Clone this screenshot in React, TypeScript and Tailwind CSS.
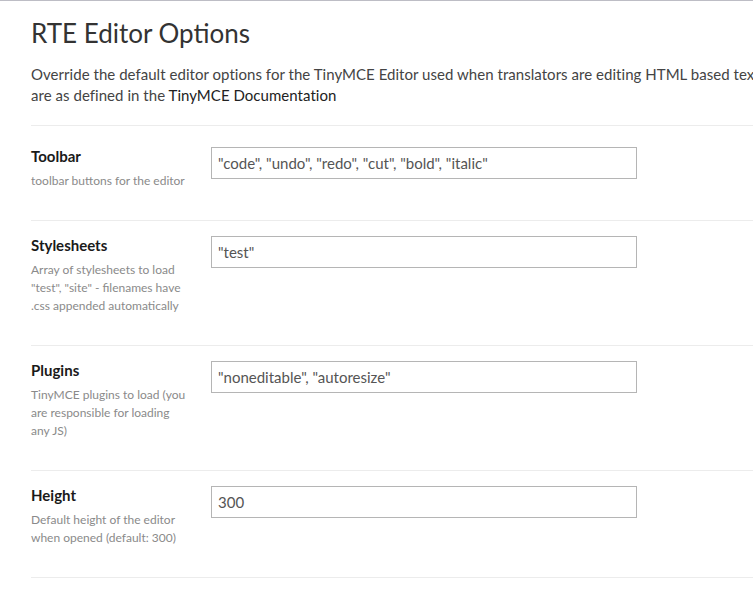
import React from "react";

type Row = { label: string; help: string[]; value: string; pt: string };

const rows: Row[] = [
  { label: "Toolbar", help: ["toolbar buttons for the editor"], value: '"code", "undo", "redo", "cut", "bold", "italic"', pt: "pt-[21px]" },
  { label: "Stylesheets", help: ["Array of stylesheets to load", '"test", "site" - filenames have', ".css appended automatically"], value: '"test"', pt: "pt-[15px]" },
  { label: "Plugins", help: ["TinyMCE plugins to load (you", "are responsible for loading", "any JS)"], value: '"noneditable", "autoresize"', pt: "pt-[15px]" },
  { label: "Height", help: ["Default height of the editor", "when opened (default: 300)"], value: "300", pt: "pt-[15px]" },
];

export default function App() {
  return (
    <div
      className="w-[753px] h-[591px] overflow-hidden bg-white border-t border-[#bdbdc5]"
      style={{ fontFamily: "Lato, 'Open Sans', sans-serif" }}
    >
      <div className="w-[1000px] pl-[31px] pt-[17px]">
        <h1 className="text-[26px] leading-[30px] text-[#333] font-normal">RTE Editor Options</h1>
        <p className="mt-[16px] text-[15px] leading-[21px] text-[#444] whitespace-nowrap tracking-[0.04px]">
          Override the default editor options for the TinyMCE Editor used when translators are editing HTML based text. Options
          <br />
          are as defined in the <span className="text-[#222]">TinyMCE Documentation</span>
        </p>
        <div className="mt-[19px]">
          {rows.map((r) => (
            <div key={r.label} className={`flex border-t border-[#ececec] pb-[30px] ${r.pt}`}>
              <div className="w-[180px] shrink-0">
                <div className="text-[15px] leading-[18px] font-bold text-[#1a1a1a]">{r.label}</div>
                <div className="mt-[7px] text-[12px] leading-[18px] text-[#8a8a8a]">
                  {r.help.map((h) => (
                    <div key={h} className="whitespace-nowrap">{h}</div>
                  ))}
                </div>
              </div>
              <div className="w-[426px] h-[32px] border border-[#b5b5b5] px-[6px] flex items-center text-[15px] text-[#555]">
                {r.value}
              </div>
            </div>
          ))}
          <div className="border-t border-[#ececec]" />
        </div>
      </div>
    </div>
  );
}
